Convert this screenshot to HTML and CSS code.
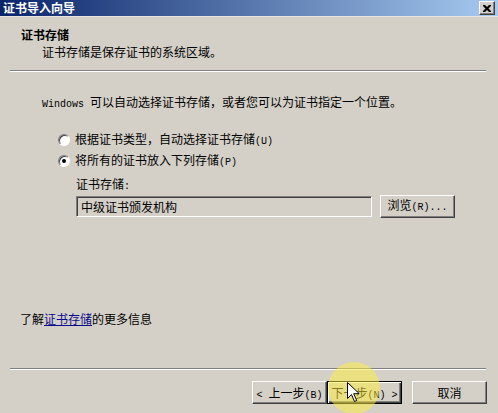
FILE: index.html
```html
<!DOCTYPE html>
<html lang="zh-CN">
<head>
    <meta charset="UTF-8">
    <title>证书导入向导</title>
    <link rel="stylesheet" href="styles.css">
</head>
<body>

    <div class="dialog">
        <div class="titlebar">
            <span class="title">证书导入向导</span>
            <span class="close">
                <svg width="8" height="7" viewBox="0 0 8 7">
                    <path d="M0 0h2l2 2 2-2h2v1l-2.5 2.5L8 6v1H6L4 5 2 7H0V6l2.5-2.5L0 1z" fill="#000"/>
                </svg>
            </span>
        </div>

        <!-- Заголовок страницы мастера -->
        <div class="header">
            <div class="h-title">证书存储</div>
            <div class="h-sub">证书存储是保存证书的系统区域。</div>
        </div>
        <div class="sep"></div>

        <div class="content">
            <div class="inset">
                <p class="intro"><span class="lat">Windows </span>可以自动选择证书存储，或者您可以为证书指定一个位置。</p>

                <div class="options">
                    <div class="opt"><span class="radio"></span><span>根据证书类型，自动选择证书存储<span class="lat">(U)</span></span></div>
                    <div class="opt"><span class="radio checked"></span><span>将所有的证书放入下列存储<span class="lat">(P)</span></span></div>
                </div>

                <div class="store">
                    <div class="store-label">证书存储<span class="lat">:</span></div>
                    <div class="store-row">
                        <div class="field">中级证书颁发机构</div>
                        <span class="btn browse"><span>浏览<span class="lat">(R)...</span></span></span>
                    </div>
                </div>
            </div>

            <p class="more">了解<a href="#">证书存储</a>的更多信息</p>
        </div>
        <div class="sep"></div>

        <div class="footer">
            <span class="btn"><span><span class="lat">&lt; </span>上一步<span class="lat">(B)</span></span></span>
            <span class="btn default"><span>下一步<span class="lat">(N) &gt;</span></span></span>
            <span class="btn cancel"><span>取消</span></span>
        </div>

        <div class="spot"></div>
        <svg class="pointer" width="12" height="20" viewBox="0 0 12 20">
            <path d="M0.5 0.5v16l4-4 3 7 2.2-1-3-6.8h5.6z" fill="#fff" stroke="#000" stroke-width="1"/>
        </svg>
    </div>

</body>
</html>
```

FILE: styles.css
```css
body {
    margin: 0;
    font-family: "Noto Sans CJK SC", sans-serif;
    font-size: 12px;
    color: #000;
    background-color: #d4d0c8;
}
.dialog {
    position: relative;
    width: 498px;
    height: 413px;
    background-color: #d4d0c8;
    display: flex;
    flex-direction: column;
    overflow: hidden;
}
.lat {
    font-family: "Liberation Mono", monospace;
    font-size: 10px;
}
.titlebar {
    height: 16px;
    display: flex;
    align-items: center;
    justify-content: space-between;
    padding: 0 3px;
    background: linear-gradient(to right, #0a246a, #a6caf0);
}
.title {
    color: #fff;
    font-weight: bold;
    line-height: 14px;
}
.close {
    width: 14px;
    height: 12px;
    display: flex;
    align-items: center;
    justify-content: center;
    background-color: #d4d0c8;
    border: 1px solid;
    border-color: #fff #404040 #404040 #fff;
    box-shadow: inset -1px -1px #808080;
}
.header {
    height: 54px;
    box-sizing: border-box;
    padding: 11px 0 0 21px;
    border-top: 1px solid #e6e3de;
    line-height: 14px;
}
.h-title {
    font-weight: bold;
}
.h-sub {
    margin-top: 3px;
    padding-left: 21px;
}
.sep {
    margin: 0 12px 0 10px;
    border-top: 1px solid #808080;
    border-bottom: 1px solid #fff;
}
.content {
    flex: 1;
    display: flex;
    flex-direction: column;
    padding: 23px 0 0 20px;
    line-height: 14px;
}
.inset {
    padding-left: 22px;
}
.intro {
    margin: 0;
}
.options {
    margin-top: 21px;
    padding-left: 16px;
    display: flex;
    flex-direction: column;
    gap: 7px;
}
.opt {
    display: flex;
    align-items: center;
    height: 14px;
}
.radio {
    position: relative;
    width: 10px;
    height: 10px;
    margin-right: 5px;
    border-radius: 50%;
    border: 1px solid;
    border-color: #808080 #fff #fff #808080;
    background-color: #fff;
    box-shadow: inset 1px 1px #404040;
}
.radio.checked::after {
    content: "";
    position: absolute;
    left: 3px;
    top: 3px;
    width: 4px;
    height: 4px;
    border-radius: 50%;
    background-color: #000;
}
.store {
    margin-top: 9px;
    padding-left: 34px;
}
.store-row {
    margin-top: 1px;
    display: flex;
    align-items: center;
    gap: 8px;
}
.field {
    width: 296px;
    height: 21px;
    box-sizing: border-box;
    padding: 3px 4px;
    border: 1px solid;
    border-color: #808080 #fff #fff #808080;
    box-shadow: inset 1px 1px #404040;
    background-color: #d4d0c8;
}
.btn {
    width: 75px;
    height: 23px;
    box-sizing: border-box;
    display: flex;
    align-items: center;
    justify-content: center;
    white-space: pre;
    border: 1px solid;
    border-color: #fff #404040 #404040 #fff;
    box-shadow: inset -1px -1px #808080;
    background-color: #d4d0c8;
}
.btn.default {
    border-color: #000;
    box-shadow: inset 1px 1px #fff, inset -1px -1px #404040, inset -2px -2px #808080;
}
.more {
    margin: auto 0 42px 0;
}
.more a {
    color: #0a0a8a;
    text-decoration: underline;
}
.footer {
    height: 43px;
    box-sizing: border-box;
    padding: 11px 11px 0 0;
    display: flex;
    justify-content: flex-end;
}
.cancel {
    margin-left: 10px;
}
.spot {
    position: absolute;
    left: 328px;
    top: 362px;
    width: 52px;
    height: 52px;
    border-radius: 50%;
    background-color: rgba(255, 240, 60, 0.5);
}
.pointer {
    position: absolute;
    left: 347px;
    top: 382px;
}
```
